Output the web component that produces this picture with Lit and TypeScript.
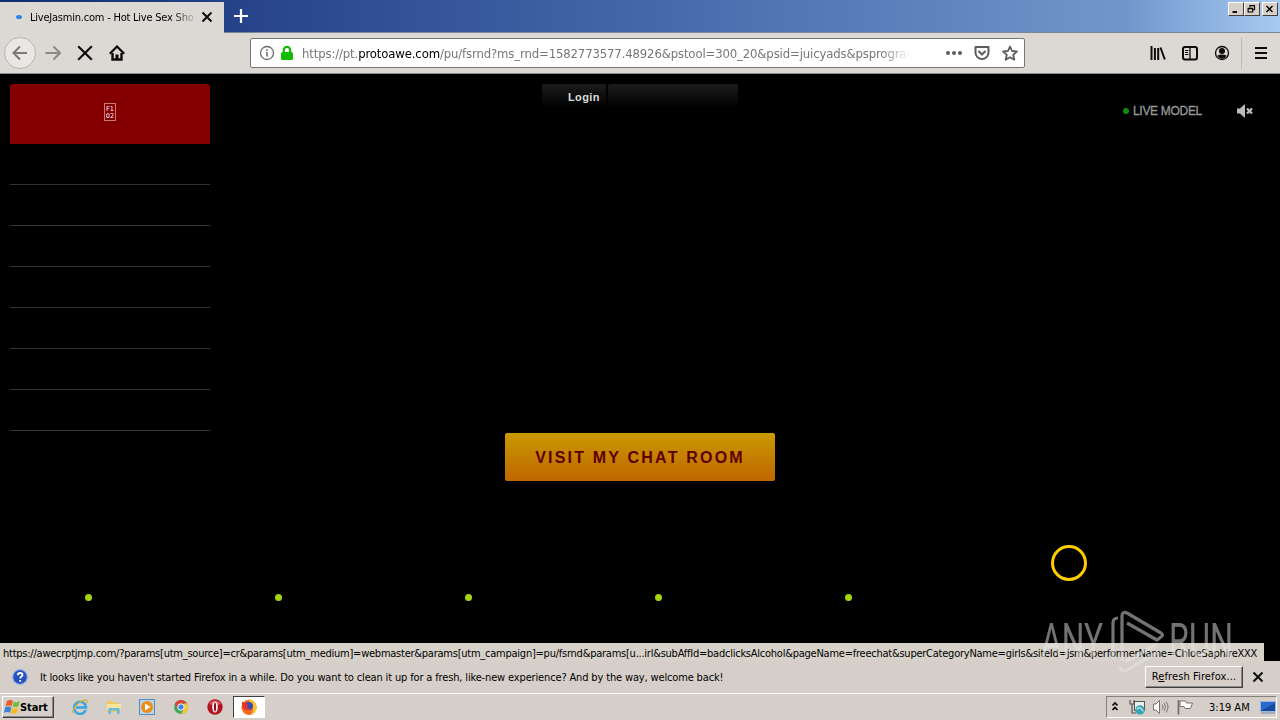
import { LitElement, html, css, svg } from 'lit';
import { customElement, property } from 'lit/decorators.js';

const icons: Record<string, unknown> = {
    back: svg`<path d="M15 8H1.500M8 1.500L1.500 8 8 14.500" stroke="#7c7a78" stroke-width="2"/>`,
    forward: svg`<path d="M.5 8h14M8.500 1.500L15 8l-6.500 6.500" stroke="#8b8986" stroke-width="2"/>`,
    stop: svg`<path d="M1.200 1.200l13.600 13.600M14.800 1.200L1.200 14.800" stroke="#0c0c0d" stroke-width="2.200"/>`,
    home: svg`<path d="M.8 8.700L8 1.500l7.200 7.200" stroke="#0c0c0d" stroke-width="2.200"/><path d="M3.500 8v6.500h9V8" stroke="#0c0c0d" stroke-width="2.400"/><path d="M6.500 9.500h3V15h-3z" fill="#0c0c0d"/>`,
    info: svg`<circle cx="8" cy="8" r="6.500" stroke="#6c6c6c" stroke-width="1.300"/><path d="M8 7v4.500M8 4.200v1.800" stroke="#6c6c6c" stroke-width="1.600"/>`,
    lock: svg`<rect x="2" y="7" width="12" height="8" rx="1.500" fill="#12bc00"/><path d="M4.800 8V5a3.200 3.200 0 0 1 6.400 0v3" stroke="#12bc00" stroke-width="2.200"/>`,
    dots: svg`<g fill="#5c5c5c"><circle cx="2" cy="8" r="2"/><circle cx="8" cy="8" r="2"/><circle cx="14" cy="8" r="2"/></g>`,
    pocket: svg`<path d="M1.500 2h13v5.500a6.500 6.500 0 0 1-13 0z" stroke="#5c5c5c" stroke-width="2" stroke-linejoin="round"/><path d="M5 6.500l3 3 3-3" stroke="#5c5c5c" stroke-width="2" stroke-linecap="round"/>`,
    star: svg`<path d="M8 1.500l2 4.500 4.900.5-3.700 3.300 1.100 4.900L8 12.200l-4.300 2.500 1.100-4.900L1.100 6.500 6 6z" stroke="#5c5c5c" stroke-width="1.800" stroke-linejoin="round"/>`,
    library: svg`<path d="M1.500 1v14M4.900 3v12M8.200 3v12" stroke="#0c0c0d" stroke-width="2"/><path d="M10.500 2.500l4.300 12" stroke="#0c0c0d" stroke-width="2"/>`,
    sidebar: svg`<rect x="1" y="2" width="14" height="12.500" rx="2" stroke="#0c0c0d" stroke-width="2"/><path d="M8 2v12" stroke="#0c0c0d" stroke-width="1.300"/><path d="M3 5.500h3.500M3 7.500h3M3 9.500h3.500" stroke="#0c0c0d"/>`,
    account: svg`<circle cx="8" cy="8" r="6.500" stroke="#0c0c0d" stroke-width="1.300"/><circle cx="8" cy="6" r="3" fill="#0c0c0d"/><path d="M3.500 10.500q4.500-2 9 0-1.500 3.300-4.500 3.300t-4.500-3.300z" fill="#0c0c0d"/>`,
    menu: svg`<path d="M2 3h12M2 8h12M2 13h12" stroke="#0c0c0d" stroke-width="2"/>`,
    plus: svg`<path d="M8 1v14M1 8h14" stroke="#fff" stroke-width="2.200"/>`,
    close: svg`<path d="M3.500 3.500l9 9M12.500 3.500l-9 9" stroke="#0c0c0d" stroke-width="2"/>`,
    muted: svg`<path d="M0 5.500h3L8 1v14l-5-4.500H0z" fill="#bdbdbd"/><path d="M10 5.500l5 5M15 5.500l-5 5" stroke="#bdbdbd" stroke-width="2.300"/>`,
    help: svg`<circle cx="8" cy="8" r="7.300" fill="#2551bd" stroke="#8babe2" stroke-width="1.200"/><path d="M5.800 6.200c0-3 4.700-2.800 4.700-.2 0 1.500-2.300 1.700-2.300 3.500M8.200 11v1.800" stroke="#fff" stroke-width="1.800"/>`,
    windows: svg`<path d="M3 2q3-2 6 0L7.500 7.300q-3-1.500-6 0z" fill="#ec5b2b"/><path d="M9.800 2.600q3 1.500 6-.5l-1.300 5q-3 1.800-6 0z" fill="#79b83a"/><path d="M1.300 8.300q3-1.600 6 0l-1.300 5.500q-3-1.700-6 0z" fill="#3a82d2"/><path d="M8.200 8.600q3 1.600 6 0l-1.300 5.500q-3 1.600-6 0z" fill="#f5bc25"/>`,
    explorer: svg`<path d="M13.700 10.800A6 6 0 1 1 14 8.500H4" stroke="#38a5e2" stroke-width="2.500"/><path d="M1.500 14.500C-2 10 11-1 15 1.500q1 .8-.5 3" stroke="#d9b23e" stroke-width="1.300"/>`,
    folder: svg`<path d="M1 2h6l1 2h6v9H1z" fill="#ecca60"/><path d="M1 5h14v6H1z" fill="#f8e39b"/><path d="M2.500 15V9h11v6h-2.500v-3.500H5V15z" fill="#68b8df"/>`,
    media: svg`<rect x=".5" y=".5" width="15" height="15" fill="#b6d6ee" stroke="#558ebf"/><circle cx="8" cy="8" r="6" fill="#f18a16"/><path d="M6 4.500L11.500 8 6 11.500z" fill="#fff"/>`,
    chrome: svg`<circle cx="8" cy="8" r="7" fill="#45a853"/><path d="M1.900 4.500A7 7 0 0 1 14.100 4.500H8L5 10z" fill="#df4332"/><path d="M14.100 4.500A7 7 0 0 1 8 15l3-5V4.500z" fill="#f8c72f"/><circle cx="8" cy="8" r="3.200" fill="#3f7fe8" stroke="#fff"/>`,
    opera: svg`<circle cx="8" cy="8" r="7.700" fill="#b3141f"/><path d="M2 5a7 7 0 0 1 12 0q-6 2-12 0z" fill="#dc5a5c"/><ellipse cx="8" cy="8" rx="2.800" ry="5.600" fill="#fff"/><ellipse cx="8" cy="8" rx="1.100" ry="4.600" fill="#8e1018"/>`,
    firefox: svg`<circle cx="8" cy="8.300" r="7.600" fill="#f36b21"/><path d="M8 .5c5 0 8 4 7.600 8.500-.4 3.600-3 6.600-6.600 6.800 3-2 3.500-5.500 2-8S8.500 4 8 .5z" fill="#fcc42c"/><circle cx="8" cy="7" r="4" fill="#364bb8"/><path d="M1.200 2.500q1 0 2 1.500 1-1 2.500-1Q4.500 4.500 6 5.300l1.500.5L6 7.500Q6.500 9.800 9.500 9.500q-2 2.500-5 1.500Q0 8.500 1.200 2.500z" fill="#e4352d"/>`,
    chevrons: svg`<path d="M5.500 6.500L8 4l2.500 2.500M5.500 11L8 8.500l2.500 2.500" stroke="#000" stroke-width="1.700"/>`,
    network: svg`<path d="M1 1v4h4V1M3 5v9h4" stroke="#555" stroke-width="1.200"/><rect x="5.500" y="2.500" width="10" height="9" fill="#e8f0f1" stroke="#555"/><circle cx="11" cy="11" r="4.700" fill="#36a7b2"/><path d="M8 10.500q2-3 4-1t2 3" stroke="#b7e8dd" stroke-width="1.300"/>`,
    speaker: svg`<path d="M.5 5h2.500L6.500 1.500v13L3 11H.5z" fill="#fff" stroke="#77726e"/><path d="M9 5.500q2 2.500 0 5M11 4q3 4 0 8M13 2.500q4 5.500 0 11" stroke="#77726e"/>`,
    flag: svg`<path d="M1.500 1v14.500" stroke="#6b6865" stroke-width="1.600"/><path d="M3 2h5.500l1 2H15.500l-2 5.500H8l-1-2H3z" fill="#fff" stroke="#77726e"/>`,
    desktop: svg`<rect x=".5" y="2.500" width="15" height="10" fill="#2768ca" stroke="#9db6d8"/><path d="M1 12L15 4v8z" fill="#174a9c"/><path d="M1 14h14" stroke="#6a87ad"/>`,
    minimize: svg`<path d="M4 12h6" stroke="#000" stroke-width="2.500"/>`,
    restore: svg`<path d="M6 6V3.500h6V9h-2M6 3.500h6" stroke="#000" stroke-width="1.500"/><path d="M3.500 7h6v5h-6zM3.500 7.500h6" stroke="#000" stroke-width="1.500"/>`,
    shut: svg`<path d="M4 4l8 8M12 4l-8 8" stroke="#000" stroke-width="1.900"/>`,
};

@customElement('ui-icon')
class UiIcon extends LitElement {

    @property() name = '';

    static styles = css`
        :host {
            display: inline-flex;
            flex: none;
            width: 16px;
            height: 16px;
        }

        svg {
            width: 100%;
            height: 100%;
        }
    `;

    render() {
        return html`<svg viewBox="0 0 16 16" fill="none">${icons[this.name]}</svg>`;
    }
}

@customElement('browser-chrome')
class BrowserChrome extends LitElement {

    static styles = css`
        :host {
            display: block;
            flex: none;
            height: 74px;
        }

        .titlebar {
            display: flex;
            height: 32px;
            border-bottom: 1px solid #7e8797;
            background: linear-gradient(90deg, #0f2d72 0%, #27448c 20%, #4567a9 50%, #7296cc 88%, #a6caf0 100%);
        }

        .tab {
            box-sizing: border-box;
            display: flex;
            align-items: center;
            width: 224px;
            height: 31px;
            margin-top: 2px;
            padding: 0 9px 1px 16px;
            background: #dcd8d3;
        }

        .spinner {
            width: 6px;
            height: 4px;
            border-radius: 50%;
            background: #2787ec;
        }

        .title {
            width: 166px;
            margin: 0 3px 0 8px;
            overflow: hidden;
            white-space: nowrap;
            font-size: 11px;
            letter-spacing: -0.22px;
            -webkit-mask-image: linear-gradient(90deg, #000 142px, transparent 168px);
        }

        .new-tab {
            margin: 8px 0 0 9px;
        }

        .window-buttons {
            display: flex;
            margin: 2px 2px 0 auto;
        }

        .window-buttons span {
            box-sizing: border-box;
            display: flex;
            width: 16px;
            height: 14px;
            border: 1px solid;
            border-color: #fff #404040 #404040 #fff;
            background: #d6d0c8;
        }

        .window-buttons span:last-child {
            margin-left: 2px;
        }

        .window-buttons ui-icon {
            width: 13px;
            height: 12px;
        }

        .toolbar {
            box-sizing: border-box;
            display: flex;
            align-items: center;
            height: 41px;
            padding: 0 3px 0 4px;
            border-bottom: 1px solid #8d8b87;
            background: #dcd8d3;
        }

        .tool {
            display: flex;
            align-items: center;
            justify-content: center;
            width: 32px;
            height: 32px;
        }

        .round {
            box-sizing: border-box;
            margin-right: 1px;
            border: 1px solid #b8b5b1;
            border-radius: 50%;
            background: #e9e7e4;
        }

        .url {
            box-sizing: border-box;
            display: flex;
            align-items: center;
            gap: 4px;
            width: 775px;
            height: 30px;
            margin-left: 117px;
            padding: 0 6px 0 8px;
            border: 1px solid #777;
            border-radius: 2px;
            background: #fff;
        }

        .address {
            width: 608px;
            margin: 1px 32px 0 3px;
            overflow: hidden;
            white-space: nowrap;
            color: #777;
            font-size: 13px;
            letter-spacing: -0.14px;
            -webkit-mask-image: linear-gradient(90deg, #000 580px, transparent 608px);
        }

        .address b {
            font-weight: 400;
            color: #000;
        }

        .actions {
            display: flex;
            gap: 12px;
        }

        .right {
            display: flex;
            align-items: center;
            margin-left: auto;
        }

        .separator {
            width: 1px;
            height: 32px;
            margin: 0 3px;
            background: #bebab6;
        }
    `;

    render() {
        return html`
            <div class="titlebar">
                <div class="tab">
                    <span class="spinner"></span>
                    <span class="title">LiveJasmin.com - Hot Live Sex Sho</span>
                    <ui-icon name="close"></ui-icon>
                </div>
                <ui-icon class="new-tab" name="plus"></ui-icon>
                <div class="window-buttons">
                    <span><ui-icon name="minimize"></ui-icon></span>
                    <span><ui-icon name="restore"></ui-icon></span>
                    <span><ui-icon name="shut"></ui-icon></span>
                </div>
            </div>
            <div class="toolbar">
                <span class="tool round"><ui-icon name="back"></ui-icon></span>
                ${['forward', 'stop', 'home'].map(x => html`<span class="tool"><ui-icon name=${x}></ui-icon></span>`)}
                <div class="url">
                    <ui-icon name="info"></ui-icon>
                    <ui-icon name="lock"></ui-icon>
                    <span class="address">https://pt.<b>protoawe.com</b>/pu/fsrnd?ms_rnd=1582773577.48926&amp;pstool=300_20&amp;psid=juicyads&amp;psprogram</span>
                    <span class="actions">
                        <ui-icon name="dots"></ui-icon>
                        <ui-icon name="pocket"></ui-icon>
                        <ui-icon name="star"></ui-icon>
                    </span>
                </div>
                <div class="right">
                    ${['library', 'sidebar', 'account'].map(x => html`<span class="tool"><ui-icon name=${x}></ui-icon></span>`)}
                    <span class="separator"></span>
                    <span class="tool"><ui-icon name="menu"></ui-icon></span>
                </div>
            </div>
        `;
    }
}

@customElement('chat-page')
class ChatPage extends LitElement {

    static styles = css`
        :host {
            display: block;
            position: relative;
            height: 587px;
            background: #000;
            font-family: "Liberation Sans", Arial, sans-serif;
        }

        .top {
            display: grid;
            grid-template-columns: 1fr 196px 1fr;
            padding: 10px 10px 0;
        }

        .menu {
            width: 200px;
        }

        .brand {
            display: flex;
            align-items: center;
            justify-content: center;
            height: 60px;
            border-radius: 3px 3px 0 0;
            background: #840000;
        }

        .glyph {
            box-sizing: border-box;
            width: 12px;
            height: 18px;
            margin-top: -4px;
            padding-top: 2px;
            border: 1px solid #cf7777;
            color: #fff;
            font: 6.5px/6.5px "DejaVu Sans", sans-serif;
            text-align: center;
        }

        .row {
            height: 40px;
            border-bottom: 1px solid #333;
        }

        .login-bar {
            display: flex;
            gap: 2px;
            height: 24px;
            font-size: 11px;
            font-weight: 700;
            line-height: 26px;
            letter-spacing: 0.4px;
            color: #ddd;
        }

        .login-bar span {
            box-sizing: border-box;
            width: 64px;
            padding-left: 26px;
            border-radius: 2px;
            background: linear-gradient(#1c1c1c, #000);
        }

        .login-bar span:last-child {
            flex: 1;
        }

        .status {
            display: flex;
            align-items: center;
            justify-content: flex-end;
            height: 16px;
            margin-top: 19px;
            padding-right: 17px;
            font-size: 12px;
            letter-spacing: -0.3px;
            color: #999;
            -webkit-text-stroke: 0.3px #999;
        }

        .live {
            width: 6px;
            height: 6px;
            margin-right: 4px;
            border-radius: 50%;
            background: #118a11;
        }

        .status ui-icon {
            margin-left: 35px;
        }

        .visit {
            box-sizing: border-box;
            display: flex;
            align-items: center;
            justify-content: center;
            width: 270px;
            height: 48px;
            margin: 2px auto 0;
            padding-top: 1px;
            border-radius: 2px;
            background: linear-gradient(#c99a00, #bf6500);
            color: #5c0000;
            font-size: 16px;
            font-weight: 700;
            letter-spacing: 2.2px;
        }

        .dots {
            display: grid;
            grid-template-columns: repeat(5, 190px);
            margin: 113px 0 0 85px;
        }

        .dots span {
            width: 7px;
            height: 7px;
            border-radius: 50%;
            background: #a3d60a;
        }

        .ring {
            position: absolute;
            left: 1051px;
            top: 471px;
            box-sizing: border-box;
            width: 36px;
            height: 36px;
            border: 3px solid #fc0;
            border-radius: 50%;
        }

        .link {
            position: absolute;
            left: 0;
            bottom: 0;
            box-sizing: border-box;
            width: 1264px;
            height: 18px;
            padding: 1px 0 0 3px;
            white-space: nowrap;
            background: #d6d2c9;
            color: #000;
            font: 11px/19px "DejaVu Sans Condensed", "DejaVu Sans", sans-serif;
            letter-spacing: -0.24px;
        }
    `;

    render() {
        return html`
            <div class="top">
                <div class="menu">
                    <div class="brand"><span class="glyph">F1<br>02</span></div>
                    ${Array.from({ length: 7 }, () => html`<div class="row"></div>`)}
                </div>
                <div class="login-bar"><span>Login</span><span></span></div>
                <div class="status">
                    <span class="live"></span>LIVE MODEL
                    <ui-icon name="muted"></ui-icon>
                </div>
            </div>
            <div class="visit">VISIT MY CHAT ROOM</div>
            <div class="dots">${Array.from({ length: 5 }, () => html`<span></span>`)}</div>
            <div class="ring"></div>
            <div class="link">https://awecrptjmp.com/?params[utm_source]=cr&amp;params[utm_medium]=webmaster&amp;params[utm_campaign]=pu/fsrnd&amp;params[u...irl&amp;subAffId=badclicksAlcohol&amp;pageName=freechat&amp;superCategoryName=girls&amp;siteId=jsm&amp;performerName=ChloeSaphireXXX</div>
        `;
    }
}

@customElement('task-bar')
class TaskBar extends LitElement {

    static styles = css`
        :host {
            box-sizing: border-box;
            display: flex;
            align-items: center;
            height: 27px;
            padding: 0 3px 0 2px;
            border-top: 1px solid #fff;
            background: #d6cfc9;
        }

        .start {
            box-sizing: border-box;
            display: flex;
            align-items: center;
            width: 52px;
            height: 22px;
            padding-left: 1px;
            border: 1px solid;
            border-color: #fff #404040 #404040 #fff;
            box-shadow: inset -1px -1px #888;
            font-size: 11px;
            font-weight: 700;
            letter-spacing: -0.1px;
        }

        .apps {
            display: flex;
            margin-left: 9px;
        }

        .app {
            display: flex;
            align-items: center;
            justify-content: center;
            width: 33.8px;
            height: 22px;
        }

        .app.active {
            box-sizing: border-box;
            width: 32px;
            margin-left: 1px;
            border: 1px solid;
            border-color: #404040 #fff #fff #404040;
            background: #fff;
        }

        .tray {
            box-sizing: border-box;
            display: flex;
            align-items: center;
            width: 171px;
            height: 22px;
            margin-left: auto;
            border: 1px solid;
            border-color: #858079 #fff #fff #858079;
            font-size: 11px;
        }

        .tray ui-icon {
            margin-right: 8px;
        }

        .tray ui-icon:first-child {
            margin-right: 6px;
        }

        .tray ui-icon:last-child {
            margin-right: 0;
        }

        .clock {
            width: 43px;
            margin: 0 8px;
            white-space: nowrap;
            letter-spacing: 0;
        }
    `;

    render() {
        return html`
            <div class="start"><ui-icon name="windows"></ui-icon>Start</div>
            <div class="apps">
                ${['explorer', 'folder', 'media', 'chrome', 'opera'].map(x => html`<span class="app"><ui-icon name=${x}></ui-icon></span>`)}
                <span class="app active"><ui-icon name="firefox"></ui-icon></span>
            </div>
            <div class="tray">
                ${['chevrons', 'network', 'speaker', 'flag'].map(x => html`<ui-icon name=${x}></ui-icon>`)}
                <span class="clock">3:19 AM</span>
                <ui-icon name="desktop"></ui-icon>
            </div>
        `;
    }
}

@customElement('app-root')
class AppRoot extends LitElement {

    static styles = css`
        :host {
            display: flex;
            flex-direction: column;
            position: relative;
            width: 1280px;
            height: 720px;
            overflow: hidden;
            color: #000;
            font-family: "DejaVu Sans Condensed", "DejaVu Sans", sans-serif;
        }

        .notice {
            box-sizing: border-box;
            display: flex;
            align-items: center;
            height: 32px;
            padding: 0 14px 0 12px;
            background: #d6cfc9;
            font-size: 11px;
            letter-spacing: -0.15px;
            white-space: nowrap;
        }

        .message {
            margin-left: 12px;
        }

        .refresh {
            box-sizing: border-box;
            width: 98px;
            height: 22px;
            margin: -1px 7px 0 auto;
            border: 1px solid;
            border-color: #fff #404040 #404040 #fff;
            box-shadow: inset -1px -1px #888;
            line-height: 20px;
            letter-spacing: 0.1px;
            text-align: center;
        }

        .watermark {
            position: absolute;
            left: 1035px;
            top: 605px;
            width: 205px;
            height: 72px;
            opacity: 0.5;
        }

        .watermark text {
            font: 400 49px Roboto, sans-serif;
        }
    `;

    render() {
        return html`
            <browser-chrome></browser-chrome>
            <chat-page></chat-page>
            <div class="notice">
                <ui-icon name="help"></ui-icon>
                <span class="message">It looks like you haven't started Firefox in a while. Do you want to clean it up for a fresh, like-new experience? And by the way, welcome back!</span>
                <span class="refresh">R<u>e</u>fresh Firefox...</span>
                <ui-icon name="close"></ui-icon>
            </div>
            <task-bar></task-bar>
            <svg class="watermark" viewBox="0 0 205 72" fill="#e6e6e6">
                <text x="6" y="52" textLength="62" lengthAdjust="spacingAndGlyphs">ANY</text>
                <text x="134" y="52" textLength="64" lengthAdjust="spacingAndGlyphs">RUN</text>
                <path d="M83 13q-5 0-5 5v36M87 56V11q0-5 5-3l34 20q3 2 0 4l-4 3-30-17M90 57l32-18M85 62q2 6 7 3l31-18" fill="none" stroke="#e6e6e6" stroke-width="3.200" stroke-linejoin="round"/>
            </svg>
        `;
    }
}
